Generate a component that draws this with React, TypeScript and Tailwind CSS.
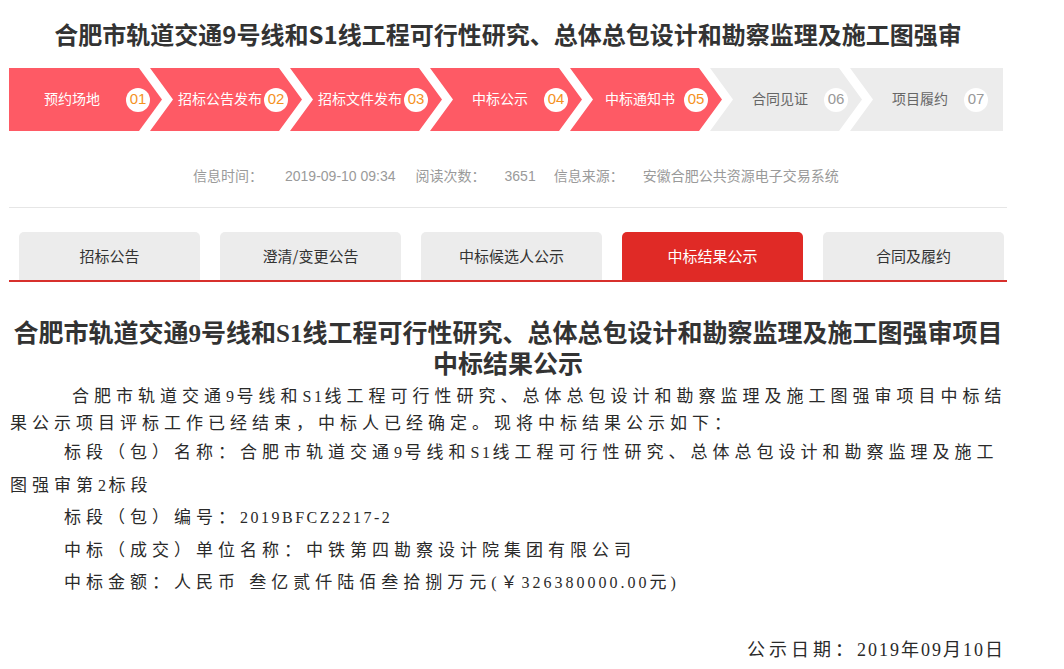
import type { ReactNode } from 'react';

const steps = [
  { label: '预约场地', num: '01', done: true },
  { label: '招标公告发布', num: '02', done: true },
  { label: '招标文件发布', num: '03', done: true },
  { label: '中标公示', num: '04', done: true },
  { label: '中标通知书', num: '05', done: true },
  { label: '合同见证', num: '06', done: false },
  { label: '项目履约', num: '07', done: false },
];

const tabs = ['招标公告', '澄清/变更公告', '中标候选人公示', '中标结果公示', '合同及履约'];

// latin runs in the body text are narrower than the spaced CJK glyphs
const L = ({ children }: { children: ReactNode }) => (
  <span className="text-[16px] tracking-[2.5px]">{children}</span>
);

function Step({ index }: { index: number }) {
  const s = steps[index];
  const first = index === 0;
  const last = index === steps.length - 1;

  let shape = 'w-[152px] -ml-[12px] [clip-path:polygon(0_0,129px_0,152px_50%,129px_100%,0_100%,23px_50%)]';
  if (first) shape = 'w-[153px] [clip-path:polygon(0_0,130px_0,153px_50%,130px_100%,0_100%)]';
  if (last) shape = 'w-[153px] -ml-[12px] [clip-path:polygon(0_0,100%_0,100%_100%,0_100%,23px_50%)]';

  return (
    <div
      className={`flex h-full shrink-0 items-center ${shape} ${
        s.done ? 'bg-[#fe5a65]' : 'bg-[#ececec]'
      } ${first ? 'pl-[9px]' : 'pl-[26px]'}`}
    >
      <span
        className={`text-center text-[14px] ${first ? 'w-[108px]' : 'w-[88px]'} ${
          s.done ? 'text-white' : 'text-[#666]'
        }`}
      >
        {s.label}
      </span>
      <span
        className={`flex h-[24px] w-[24px] items-center justify-center rounded-full bg-white text-[15px] ${
          s.done ? 'text-[#f5921e]' : 'text-[#999]'
        }`}
      >
        {s.num}
      </span>
    </div>
  );
}

export default function App() {
  return (
    <div className="min-h-screen bg-white font-['Liberation_Sans','Noto_Sans_CJK_SC',sans-serif]">
      <div className="ml-[9px] w-[998px]">
        <h1 className="flex h-[68px] items-center justify-center font-['Noto_Sans_CJK_SC',sans-serif] text-[24px] font-bold text-[#333]">
          合肥市轨道交通9号线和S1线工程可行性研究、总体总包设计和勘察监理及施工图强审
        </h1>

        <div className="flex h-[63px] w-[994px] overflow-hidden">
          {steps.map((s, i) => (
            <Step key={s.num} index={i} />
          ))}
        </div>

        <div className="flex items-center border-b border-[#e6e6e6] pt-[36px] pb-[22px] pl-[184px] text-[14px] leading-[18px] text-[#9a9a9a]">
          <span className="mr-[22px]">信息时间：</span>
          <span className="mr-[20px]">2019-09-10 09:34</span>
          <span className="mr-[19px]">阅读次数：</span>
          <span className="mr-[18px]">3651</span>
          <span className="mr-[19px]">信息来源：</span>
          <span>安徽合肥公共资源电子交易系统</span>
        </div>

        <div className="mt-[24px] flex gap-[20px] border-b-2 border-[#d7302c] pl-[10px]">
          {tabs.map((t, i) => (
            <div
              key={t}
              className={`flex h-[48px] w-[181px] items-center justify-center rounded-t-[5px] font-['Noto_Sans_CJK_SC',sans-serif] text-[15px] ${
                i === 3 ? 'bg-[#e02a26] text-white' : 'bg-[#ececec] text-[#333]'
              }`}
            >
              {t}
            </div>
          ))}
        </div>

        <div className="mt-[36px] text-center font-['Liberation_Serif','Noto_Sans_CJK_SC',serif] text-[25px] leading-[31px] font-bold text-[#333]">
          合肥市轨道交通9号线和S1线工程可行性研究、总体总包设计和勘察监理及施工图强审项目
          <br />
          中标结果公示
        </div>

        <div className="pl-[1px] font-['Liberation_Serif','Noto_Sans_CJK_SC',serif] text-[17px] tracking-[5px] whitespace-nowrap text-[#2a2a2a]">
          <p className="mt-[3px] leading-[27px]">
            <span className="block pl-[62px]">
              合肥市轨道交通<L>9</L>号线和<L>S1</L>线工程可行性研究、总体总包设计和勘察监理及施工图强审项目中标结
            </span>
            <span className="block">果公示项目评标工作已经结束，中标人已经确定。现将中标结果公示如下：</span>
          </p>
          <p className="leading-[32.5px]">
            <span className="block pl-[54px]">
              标段（包）名称：合肥市轨道交通<L>9</L>号线和<L>S1</L>线工程可行性研究、总体总包设计和勘察监理及施工
            </span>
            <span className="block">
              图强审第<L>2</L>标段
            </span>
          </p>
          <p className="pl-[54px] leading-[32.5px]">
            标段（包）编号：<L>2019BFCZ2217-2</L>
          </p>
          <p className="pl-[54px] leading-[32.5px]">中标（成交）单位名称：中铁第四勘察设计院集团有限公司</p>
          <p className="pl-[54px] leading-[32.5px]">
            中标金额：人民币 叁亿贰仟陆佰叁拾捌万元<span className="text-[16px] tracking-[4px]">(</span>
            <span className="tracking-[4px]">￥</span>
            <span className="text-[16px] tracking-[3px]">326380000.00</span>
            <span className="tracking-[4px]">元</span>
            <L>)</L>
          </p>
          <p className="mt-[34.5px] pr-[2px] text-right text-[18px] leading-[32.5px]">
            <span className="tracking-[4px]">公示日期：</span>
            <span className="tracking-[2px]">2019年09月10日</span>
          </p>
        </div>
      </div>
    </div>
  );
}
